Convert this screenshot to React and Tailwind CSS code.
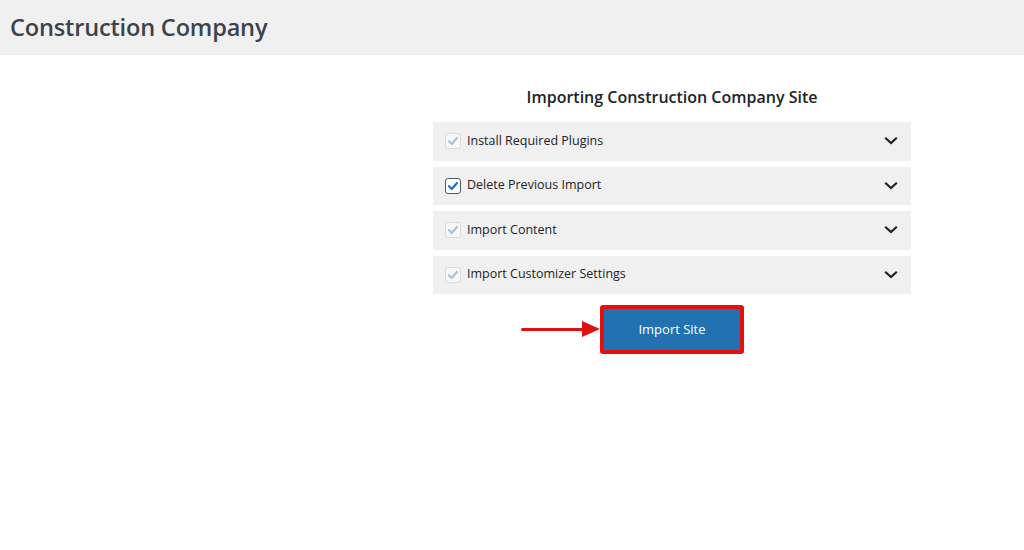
import React from "react";

const steps = [
  { label: "Install Required Plugins", checked: true, disabled: true },
  { label: "Delete Previous Import", checked: true, disabled: false },
  { label: "Import Content", checked: true, disabled: true },
  { label: "Import Customizer Settings", checked: true, disabled: true },
];

const Check = ({ disabled }) => (
  <span
    className={`w-4 h-4 rounded-[3px] border flex items-center justify-center ${
      disabled ? "border-[#dcdcde] bg-[#f6f7f7]" : "border-[#50575e] bg-white"
    }`}
  >
    <svg width="12" height="12" viewBox="0 0 12 12" fill="none">
      <path
        d="M2 6.2 L4.8 9 L10 3"
        stroke={disabled ? "#a7c3de" : "#2271b1"}
        strokeWidth="2.2"
        strokeLinecap="round"
        strokeLinejoin="round"
      />
    </svg>
  </span>
);

const Chevron = () => (
  <svg width="14" height="10" viewBox="0 0 14 10" fill="none">
    <path d="M2 2.5 L7 7 L12 2.5" stroke="#1d2327" strokeWidth="2.2" strokeLinecap="square" />
  </svg>
);

export default function App() {
  return (
    <div className="min-h-[550px] bg-white text-[#1d2327]" style={{ fontFamily: '"Open Sans", "Noto Sans", sans-serif' }}>
      <div className="h-[55px] bg-[#f0f0f1] flex items-center px-[10px]">
        <h1 className="text-[23.6px] font-semibold text-[#3c434a] tracking-[-0.2px]">Construction Company</h1>
      </div>

      <div className="flex justify-end pr-[113px]">
        <div className="w-[478px] flex flex-col">
          <h2 className="text-[16px] font-semibold text-center mt-[31px] mb-[14px] leading-[22px]">
            Importing Construction Company Site
          </h2>

          <div className="flex flex-col gap-[6px]">
            {steps.map((s) => (
              <div key={s.label} className="h-[38.5px] bg-[#f0f0f1] flex items-center pl-[12px] pr-[13px]">
                <Check disabled={s.disabled} />
                <span className="ml-[6px] text-[12.5px] font-medium">{s.label}</span>
                <span className="ml-auto flex items-center">
                  <Chevron />
                </span>
              </div>
            ))}
          </div>

          <div className="flex justify-center mt-[11px] relative">
            <div className="absolute left-[88px] top-[16px] flex items-center">
              <span className="w-[62px] h-[3px] bg-[#e01010] rounded-full" />
              <svg width="18" height="16" viewBox="0 0 18 16" className="-ml-[1px]">
                <path d="M0 0 L18 8 L0 16 Z" fill="#e01010" />
              </svg>
            </div>
            <div className="border-[4px] border-[#e60f0f] rounded-[3px]">
              <button className="w-[136px] h-[41px] bg-[#2271b1] text-white text-[13px] font-medium">
                Import Site
              </button>
            </div>
          </div>
        </div>
      </div>
    </div>
  );
}
